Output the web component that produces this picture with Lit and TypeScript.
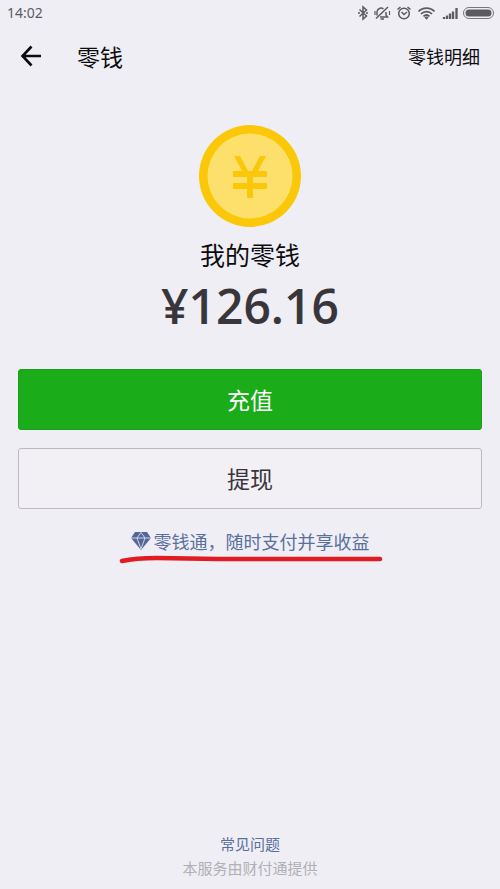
import { LitElement, html, css } from "lit";
import { customElement, property } from "lit/decorators.js";

@customElement("status-bar")
class StatusBar extends LitElement {
  static styles = css`
    :host {
      display: flex;
      align-items: center;
      justify-content: space-between;
      height: 26px;
      padding: 0 6px 0 7px;
      color: #5c5a60;
      font: 14px/26px "Noto Sans", sans-serif;
    }
    svg {
      display: block;
    }
  `;

  render() {
    return html`
      <span>14:02</span>
      <svg width="138" height="18" viewBox="0 0 138 18" fill="none" stroke="currentColor" stroke-width="1.5" aria-hidden="true">
        <path d="M3.500 5.500 10.500 12 7 15V3L10.500 6 3.500 12.500" />
        <path d="M2 9h2M10 9h2" />
        <path d="M24 13h7.500L30 11V8M21 11.500V8a4 4 0 0 1 6.500-3M24.500 15h3.500M32 3 20 14.500" />
        <path d="M19 7v4M33.500 7v4" stroke-width="1.200" />
        <circle cx="48" cy="9.500" r="5.300" />
        <path d="M45.500 8l2.500 2.500L51 8M41.500 5.500l3-2.500M54.500 5.500l-3-2.500" />
        <path d="M62.500 7.500a11 11 0 0 1 16 0M65 10a7.500 7.500 0 0 1 11 0M67.500 12.300a4.500 4.500 0 0 1 6 0" stroke-width="1.800" />
        <path d="M68.500 13.500l2 2.200 2-2.200a3 3 0 0 0-4 0z" fill="currentColor" stroke="none" />
        <path d="M88 15v-2M91 15v-3.500M94 15V9.500M97 15V7.500M100.500 15V4" stroke-width="2.300" />
        <rect x="107.500" y="3.500" width="30" height="11" rx="5.500" stroke-width="1" stroke="#77757b" />
        <rect x="109.500" y="5.500" width="26" height="7" rx="3.500" fill="currentColor" stroke="none" />
      </svg>
    `;
  }
}

@customElement("coin-badge")
class CoinBadge extends LitElement {
  static styles = css`
    :host,
    svg {
      display: block;
    }
  `;

  render() {
    return html`
      <svg width="102" height="102" viewBox="0 0 102 102" aria-hidden="true">
        <circle cx="51" cy="51" r="51" fill="#fac808" />
        <circle cx="51" cy="51" r="42.500" fill="#fde06c" />
        <path
          d="M35 31h6l8 15h4l8-15h6l-8 15h9v6H54v6h14v6H54v9h-6v-9H34v-6h14v-6H34v-6h9z"
          fill="#fac808"
        />
      </svg>
    `;
  }
}

@customElement("app-root")
class AppRoot extends LitElement {
  @property() balance = "126.16";

  static styles = css`
    :host {
      display: flex;
      flex-direction: column;
      min-height: 100vh;
      box-sizing: border-box;
      background: #f0eef5;
      color: #0c0c0e;
      font-family: "Noto Sans CJK SC", sans-serif;
    }
    button {
      font-family: inherit;
      cursor: pointer;
    }
    a {
      color: #596f9e;
      text-decoration: none;
    }
    header {
      display: flex;
      align-items: center;
      height: 60px;
      padding: 0 20px;
    }
    .back {
      display: flex;
      padding: 0;
      border: 0;
      background: none;
      color: inherit;
    }
    h1 {
      flex: 1;
      margin: 0 0 0 35px;
      font-size: 23px;
      line-height: 32px;
      font-weight: 400;
    }
    .detail {
      color: inherit;
      font-size: 18px;
      line-height: 28px;
    }
    main {
      flex: 1;
      display: flex;
      flex-direction: column;
      align-items: center;
      padding: 39px 18px 0;
    }
    .label {
      margin: 9px 0 0;
      font-size: 25px;
      line-height: 36px;
    }
    .amount {
      margin: 6px 0 0;
      color: #38363b;
      font: 600 48px/56px "Open Sans", sans-serif;
    }
    .actions {
      align-self: stretch;
      display: grid;
      gap: 18px;
      margin-top: 35px;
    }
    .action {
      height: 61px;
      padding: 0 0 2px;
      border: 1px solid #bcbac1;
      border-radius: 3px;
      background: #f2f0f4;
      color: #38363b;
      font-size: 23px;
      line-height: 32px;
    }
    .primary {
      border-color: #1f9a22;
      background: #1bac19;
      color: #fff;
    }
    .promo {
      position: relative;
      display: flex;
      align-items: center;
      gap: 3px;
      margin-top: 18px;
      font-size: 18px;
      line-height: 28px;
    }
    .stroke {
      position: absolute;
      left: -12px;
      top: 28px;
    }
    footer {
      display: flex;
      flex-direction: column;
      align-items: center;
      padding-bottom: 9px;
      font-size: 15px;
      line-height: 24px;
      color: #b0aeb6;
    }
  `;

  render() {
    return html`
      <status-bar></status-bar>
      <header>
        <button class="back" aria-label="返回">
          <svg width="22" height="22" viewBox="0 0 22 22" fill="none" stroke="currentColor" stroke-width="2.600">
            <path d="M11.500 1.500 2.500 11l9 9.500M2.500 11H21" />
          </svg>
        </button>
        <h1>零钱</h1>
        <a class="detail" href="#detail">零钱明细</a>
      </header>
      <main>
        <coin-badge></coin-badge>
        <p class="label">我的零钱</p>
        <p class="amount">¥${this.balance}</p>
        <div class="actions">
          <button class="action primary">充值</button>
          <button class="action">提现</button>
        </div>
        <a class="promo" href="#lqt">
          <svg width="20" height="18" viewBox="0 0 20 18" aria-hidden="true">
            <path d="M4 0h12l4 6-10 12L0 6z" fill="#526898" />
            <path d="M0 6h20M6 6l4 11 4-11M6 6l4-5.500L14 6" fill="none" stroke="#f0eef5" stroke-width="0.800" />
          </svg>
          <span>零钱通，随时支付并享收益</span>
          <svg class="stroke" width="264" height="10" viewBox="0 0 264 10" fill="none" aria-hidden="true">
            <path d="M3 6C12 4 22 3 38 3L100 4H261" stroke="#e01b22" stroke-width="4.500" stroke-linecap="round" stroke-linejoin="round" />
          </svg>
        </a>
      </main>
      <footer>
        <a href="#faq">常见问题</a>
        <span>本服务由财付通提供</span>
      </footer>
    `;
  }
}
